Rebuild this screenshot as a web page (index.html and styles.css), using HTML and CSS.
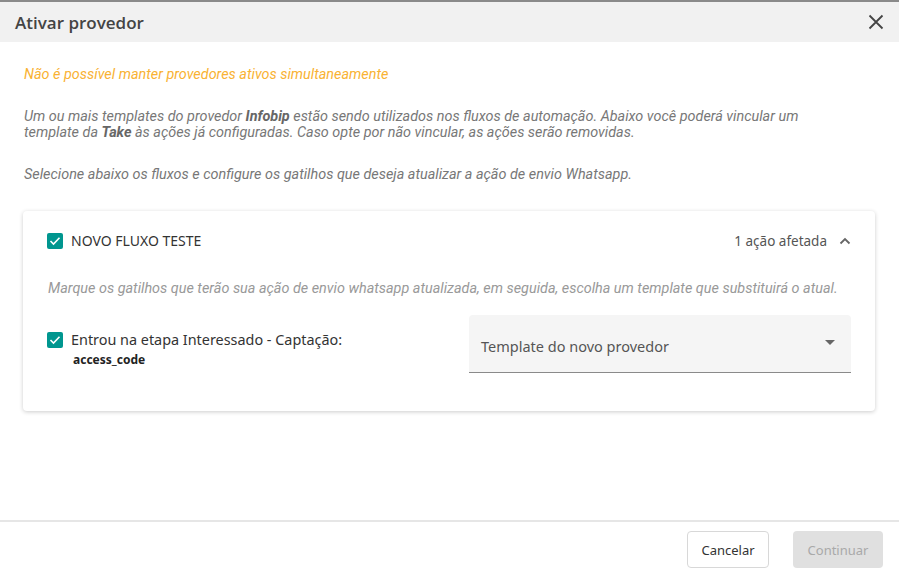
FILE: index.html
```html
<!DOCTYPE html>
<html lang="pt-BR">
<head>
    <meta charset="UTF-8">
    <title>Ativar provedor</title>
    <link rel="stylesheet" href="styles.css">
</head>
<body>
    <div class="dialog">
        <div class="dialog-header">
            <h2 class="dialog-title">Ativar provedor</h2>
            <button class="close-button" aria-label="Fechar">
                <svg width="16" height="16" viewBox="0 0 16 16">
                    <path d="M1.5 1.5 L14.5 14.5 M14.5 1.5 L1.5 14.5" stroke="#444" stroke-width="1.8" fill="none"/>
                </svg>
            </button>
        </div>

        <div class="dialog-content">
            <p class="warning-text">Não é possível manter provedores ativos simultaneamente</p>
            <p class="info-text">Um ou mais templates do provedor <b>Infobip</b> estão sendo utilizados nos fluxos de automação. Abaixo você poderá vincular um template da <b>Take</b> às ações já configuradas. Caso opte por não vincular, as ações serão removidas.</p>
            <p class="info-text">Selecione abaixo os fluxos e configure os gatilhos que deseja atualizar a ação de envio Whatsapp.</p>

            <div class="flow-card">
                <div class="flow-header">
                    <label class="check-label">
                        <span class="checkbox">
                            <svg width="12" height="10" viewBox="0 0 12 10"><path d="M1.5 5 L4.5 8 L10.5 1.8" stroke="#fff" stroke-width="1.6" fill="none"/></svg>
                        </span>
                        <span class="flow-name">NOVO FLUXO TESTE</span>
                    </label>
                    <div class="flow-meta">
                        <span>1 ação afetada</span>
                        <svg width="12" height="8" viewBox="0 0 12 8"><path d="M1.5 6.5 L6 2 L10.5 6.5" stroke="#666" stroke-width="1.8" fill="none"/></svg>
                    </div>
                </div>

                <p class="flow-hint">Marque os gatilhos que terão sua ação de envio whatsapp atualizada, em seguida, escolha um template que substituirá o atual.</p>

                <div class="trigger-row">
                    <div class="trigger-info">
                        <label class="check-label">
                            <span class="checkbox">
                                <svg width="12" height="10" viewBox="0 0 12 10"><path d="M1.5 5 L4.5 8 L10.5 1.8" stroke="#fff" stroke-width="1.6" fill="none"/></svg>
                            </span>
                            <span class="trigger-name">Entrou na etapa Interessado - Captação:</span>
                        </label>
                        <div class="trigger-code">access_code</div>
                    </div>
                    <div class="template-select">
                        <span>Template do novo provedor</span>
                        <span class="select-arrow"></span>
                    </div>
                </div>
            </div>
        </div>

        <div class="dialog-footer">
            <button class="btn btn-cancel">Cancelar</button>
            <button class="btn btn-continue" disabled>Continuar</button>
        </div>
    </div>
</body>
</html>
```

FILE: styles.css
```css
body {
    margin: 0;
    font-family: "Noto Sans", sans-serif;
    background-color: #fff;
}
.dialog {
    width: 899px;
    height: 577px;
    display: flex;
    flex-direction: column;
    box-sizing: border-box;
    border-top: 2px solid #8a8a8a;
}
.dialog-header {
    height: 40px;
    background-color: #f1f1f1;
    display: flex;
    align-items: center;
    justify-content: space-between;
    padding: 0 15px;
}
.dialog-title {
    margin: 0;
    font-family: "Open Sans", sans-serif;
    font-size: 17px;
    font-weight: 600;
    color: #444;
}
.close-button {
    background: none;
    border: none;
    padding: 0;
    width: 16px;
    height: 16px;
    cursor: pointer;
}
.dialog-content {
    flex: 1;
    padding: 25px 24px 0 24px;
}
.warning-text,
.info-text {
    font-family: Roboto, sans-serif;
    font-style: italic;
    font-size: 14.4px;
    line-height: 16px;
    margin: 0;
}
.warning-text {
    color: #f9b233;
}
.info-text {
    color: #777;
    margin-top: 26px;
    max-width: 800px;
}
.info-text b {
    color: #666;
    font-weight: 700;
}
.flow-card {
    margin-top: 28px;
    margin-left: -1px;
    width: 852px;
    box-sizing: border-box;
    padding: 20px 24px 38px 24px;
    background-color: #fff;
    border-radius: 4px;
    box-shadow: 0 1px 4px rgba(0, 0, 0, 0.2);
}
.flow-header {
    display: flex;
    justify-content: space-between;
    align-items: center;
}
.check-label {
    display: flex;
    align-items: center;
    gap: 8px;
}
.checkbox {
    width: 16px;
    height: 16px;
    border-radius: 2px;
    background-color: #00968f;
    display: flex;
    align-items: center;
    justify-content: center;
}
.flow-name {
    font-size: 14px;
    color: #333;
}
.flow-meta {
    display: flex;
    align-items: center;
    gap: 12px;
    font-size: 13.5px;
    color: #555;
}
.flow-hint {
    margin: 30px 0 0 1px;
    font-family: Roboto, sans-serif;
    font-style: italic;
    font-size: 14.4px;
    color: #999;
}
.trigger-row {
    display: flex;
    justify-content: space-between;
    align-items: flex-start;
    margin-top: 18px;
}
.trigger-info {
    padding-top: 15px;
}
.trigger-name {
    font-size: 14.4px;
    color: #333;
}
.trigger-code {
    margin: 2px 0 0 26px;
    font-size: 12px;
    font-weight: 700;
    color: #222;
}
.template-select {
    width: 382px;
    height: 58px;
    box-sizing: border-box;
    background-color: #f5f5f5;
    border-radius: 4px 4px 0 0;
    border-bottom: 1px solid #8a8a8a;
    display: flex;
    align-items: center;
    justify-content: space-between;
    padding: 5px 16px 0 12px;
    font-size: 14.5px;
    color: #555;
}
.select-arrow {
    width: 0;
    height: 0;
    border-left: 5px solid transparent;
    border-right: 5px solid transparent;
    border-top: 5px solid #666;
    margin-top: -8px;
}
.dialog-footer {
    border-top: 2px solid #e6e6e6;
    display: flex;
    justify-content: flex-end;
    gap: 24px;
    padding: 9px 16px 9px 0;
}
.btn {
    height: 37px;
    border-radius: 4px;
    font-family: "Noto Sans", sans-serif;
    font-size: 13px;
    cursor: pointer;
}
.btn-cancel {
    width: 82px;
    background-color: #fff;
    border: 1px solid #d8d8d8;
    color: #333;
}
.btn-continue {
    width: 90px;
    background-color: #e0e0e0;
    border: none;
    color: #a9a9a9;
}
```
